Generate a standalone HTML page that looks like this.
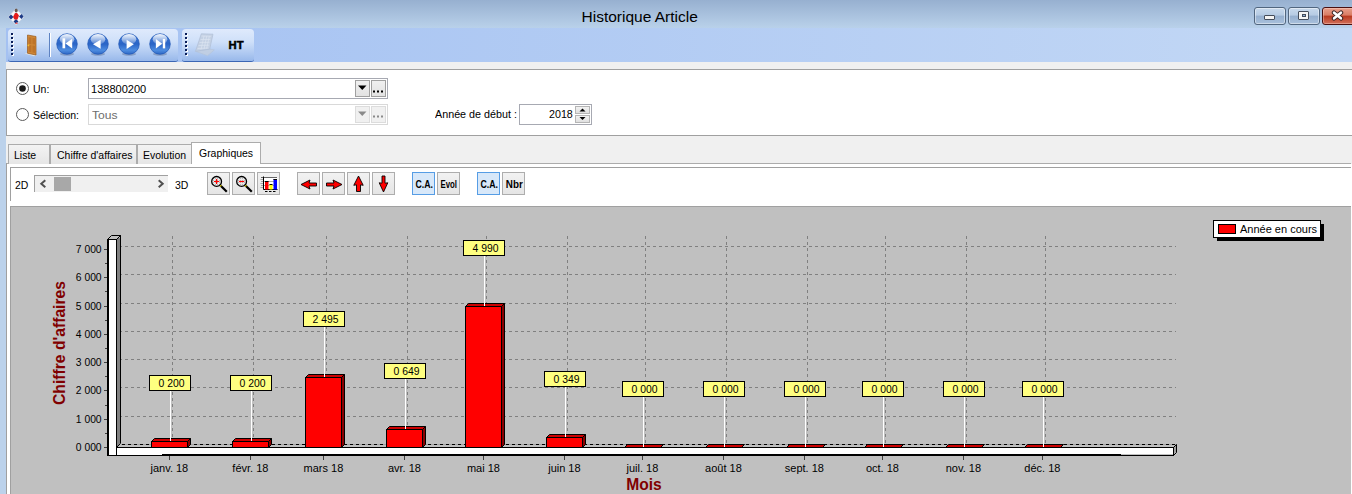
<!DOCTYPE html>
<html><head><meta charset="utf-8">
<style>
*{box-sizing:border-box;margin:0;padding:0}
html,body{width:1352px;height:494px;overflow:hidden;background:#fff;font-family:"Liberation Sans",sans-serif;color:#000}
.a{position:absolute}
.t{position:absolute;white-space:pre;font-size:10.4px;line-height:12px}
.f{position:absolute;white-space:pre;font-size:11.5px;line-height:12px;transform:scaleX(.91);transform-origin:0 0}
#title{left:0;top:0;width:1352px;height:28px;background:linear-gradient(#97b0d0,#b9d1ea)}
#lborder{left:0;top:28px;width:6px;height:466px;background:#bcd2eb}
#tbstrip{left:6px;top:28px;width:1346px;height:34px;background:linear-gradient(90deg,#a4c1f2,#c3d8f5)}
.grp{position:absolute;top:29px;height:33px;border-radius:4px 4px 3px 3px;background:linear-gradient(#dfeafc 0%,#cfe0f9 40%,#abc6f0 80%,#98b8ea 100%);border-bottom:1px solid #3b66b4}
#gstrip{left:6px;top:62px;width:1346px;height:7px;background:#f0f0f0}
#panel{left:6px;top:69px;width:1346px;height:67px;background:#fff;border-top:1px solid #a0a0a0;border-left:1px solid #a0a0a0;border-bottom:1px solid #a0a0a0}
#tabstrip{left:6px;top:136px;width:1346px;height:28px;background:#f0f0f0}
.tab{position:absolute;top:144px;height:20px;border:1px solid #acacac;border-bottom:none;background:linear-gradient(#f3f3f3,#e6e6e6)}
#tabline{left:6px;top:163px;width:1345px;height:1px;background:#acacac}
#page{left:6px;top:164px;width:1345px;height:330px;background:#fff}
.btn{position:absolute;top:172px;width:23px;height:23px;border:1px solid #adadad;background:linear-gradient(#f2f2f2,#e5e5e5)}
.btnsel{border-color:#569de5;background:#d8e8f9}
svg text{font-family:"Liberation Sans",sans-serif}
</style></head><body>
<div id="title" class="a"></div>
<!-- app icon -->
<svg class="a" style="left:6px;top:4px" width="20" height="22" viewBox="0 0 20 22">
<path d="M2 13 L10 4.5 L18 13 L10 21 Z" fill="#f4f6fa" stroke="#c8d2e2" stroke-width="0.6"/>
<g fill="#1c3a86"><path d="M2.5 13 L5 10.5 L7.5 13 L5 15.5Z"/><path d="M13 12.5 L15.5 10 L17.5 12.5 L15.5 15Z"/><path d="M7.5 17.5 L10 15 L12.5 17.5 L10 20Z"/></g>
<path d="M7 13 L9 9 L11.5 9 L13 11.5 L11.5 15.5 L8.5 15.5 Z" fill="#e41b1b"/><path d="M11 8.5 L13.5 8 L12.5 11Z" fill="#fff"/>
<path d="M9 20 L10.5 18 L12 20 Z" fill="#e86060"/>
<ellipse cx="10.2" cy="6.4" rx="1.5" ry="2" fill="#6b5a52"/>
</svg>
<div class="t" style="left:581.5px;top:8px;font-size:15.5px;line-height:18px;color:#000">Historique Article</div>
<!-- window buttons -->
<div class="a" style="left:1254px;top:7px;width:32px;height:18px;border:1px solid #51667f;border-radius:3px;background:linear-gradient(#c8d9ec 0%,#b6cbe4 45%,#95afcf 50%,#a9c1dc 100%);box-shadow:inset 0 0 0 1px rgba(255,255,255,0.45)"></div>
<div class="a" style="left:1264px;top:15px;width:11px;height:5px;background:#f4f4f4;border:1px solid #444c5a;border-radius:1px"></div>
<div class="a" style="left:1288px;top:7px;width:32px;height:18px;border:1px solid #51667f;border-radius:3px;background:linear-gradient(#c8d9ec 0%,#b6cbe4 45%,#95afcf 50%,#a9c1dc 100%);box-shadow:inset 0 0 0 1px rgba(255,255,255,0.45)"></div>
<div class="a" style="left:1298px;top:11px;width:11px;height:9px;background:#f4f4f4;border:1px solid #444c5a;border-radius:1px"></div>
<div class="a" style="left:1302px;top:14px;width:4px;height:3px;background:#8fb0d8;border:1px solid #444c5a"></div>
<div class="a" style="left:1322px;top:7px;width:40px;height:18px;border:1px solid #4a1010;border-radius:3px;background:linear-gradient(#e8a08c 0%,#d97c64 45%,#b8391f 50%,#d2705a 100%);box-shadow:inset 0 0 0 1px rgba(255,220,210,0.4)"></div>
<svg class="a" style="left:1331px;top:10px" width="13" height="11" viewBox="0 0 13 11">
<path d="M3 2.6 L10 8.4 M10 2.6 L3 8.4" stroke="#3a2626" stroke-width="4.4" stroke-linecap="round"/>
<path d="M3.1 2.7 L9.9 8.3 M9.9 2.7 L3.1 8.3" stroke="#fff" stroke-width="2.6" stroke-linecap="round"/>
</svg>

<div id="lborder" class="a"></div>
<div id="tbstrip" class="a"></div>
<div class="grp" style="left:8px;width:170px"></div>
<div class="grp" style="left:182px;width:72px"></div>
<!-- grippers -->
<svg class="a" style="left:11px;top:33px" width="3" height="24"><g fill="#fff"><rect x="1" y="1" width="2" height="2"/><rect x="1" y="5" width="2" height="2"/><rect x="1" y="9" width="2" height="2"/><rect x="1" y="13" width="2" height="2"/><rect x="1" y="17" width="2" height="2"/><rect x="1" y="21" width="2" height="2"/></g><g fill="#0a1e5a"><rect x="0" y="0" width="2" height="2"/><rect x="0" y="4" width="2" height="2"/><rect x="0" y="8" width="2" height="2"/><rect x="0" y="12" width="2" height="2"/><rect x="0" y="16" width="2" height="2"/><rect x="0" y="20" width="2" height="2"/></g></svg>
<svg class="a" style="left:185px;top:33px" width="3" height="24"><g fill="#fff"><rect x="1" y="1" width="2" height="2"/><rect x="1" y="5" width="2" height="2"/><rect x="1" y="9" width="2" height="2"/><rect x="1" y="13" width="2" height="2"/><rect x="1" y="17" width="2" height="2"/><rect x="1" y="21" width="2" height="2"/></g><g fill="#0a1e5a"><rect x="0" y="0" width="2" height="2"/><rect x="0" y="4" width="2" height="2"/><rect x="0" y="8" width="2" height="2"/><rect x="0" y="12" width="2" height="2"/><rect x="0" y="16" width="2" height="2"/><rect x="0" y="20" width="2" height="2"/></g></svg>
<!-- door -->
<svg class="a" style="left:24px;top:33px" width="16" height="24" viewBox="0 0 16 24">
<path d="M0.5 20.5 L3 20 L12.5 22.3 L10 23.2 Z" fill="#e6e4e0" opacity="0.9"/>
<path d="M3.5 2 L12 3.5 L12 22 L3.5 20.2 Z" fill="#cf8838" stroke="#9a5a1c" stroke-width="0.7"/>
<path d="M4.6 4.2 L7.4 4.6 L7.4 11.2 L4.6 10.8Z M8.4 4.8 L11 5.2 L11 11.5 L8.4 11.3Z M4.6 12 L7.4 12.3 L7.4 19.3 L4.6 18.7Z M8.4 12.5 L11 12.7 L11 20 L8.4 19.5Z" fill="#b86e26" opacity="0.75"/>
<rect x="3.6" y="11.6" width="1.6" height="1.6" fill="#f2c030"/>
</svg>
<div class="a" style="left:49px;top:33px;width:1px;height:24px;background:#5d82c2"></div>
<div class="a" style="left:50px;top:33px;width:1px;height:24px;background:#fff"></div>
<!-- nav circles -->
<svg class="a" style="left:55px;top:32px" width="118" height="25" viewBox="0 0 118 25">
<defs>
<linearGradient id="cg" x1="0" y1="0" x2="0" y2="1">
<stop offset="0" stop-color="#3b78d6"/><stop offset="0.5" stop-color="#2a64c6"/><stop offset="0.8" stop-color="#4d8ce0"/><stop offset="1" stop-color="#2f68c4"/>
</linearGradient>
<linearGradient id="hg" x1="0" y1="0" x2="0" y2="1"><stop offset="0" stop-color="#fff" stop-opacity="0.95"/><stop offset="1" stop-color="#fff" stop-opacity="0.15"/></linearGradient>
</defs>
<g id="c1">
<ellipse cx="12" cy="22" rx="7" ry="1.8" fill="#34446a" opacity="0.3"/>
<circle cx="12" cy="12" r="10.3" fill="url(#cg)" stroke="#1f56b4" stroke-width="0.7"/>
<ellipse cx="12" cy="7.3" rx="7.3" ry="5.2" fill="url(#hg)"/>
</g>
<use href="#c1" x="31"/><use href="#c1" x="62"/><use href="#c1" x="93"/>
<g fill="#fff">
<rect x="7.5" y="6.3" width="2.7" height="10"/><path d="M10.5 11.5 L17.2 6.8 L17.2 16.4Z"/>
<path d="M38 12.2 L45.6 7.7 L45.6 16.7Z"/>
<path d="M78.8 12.3 L71.6 7.7 L71.6 17Z"/>
<path d="M107.2 11.7 L100.9 6.9 L100.9 16.4Z"/><rect x="107.8" y="6.9" width="2.4" height="9.5"/>
</g>
</svg>
<!-- calculator -->
<svg class="a" style="left:193px;top:33px" width="24" height="24" viewBox="0 0 24 24">
<path d="M2.5 18.3 L14.5 22.7 L21.4 16.9 L16.7 16.1 Z" fill="#c2cfe2" stroke="#b4c3d8" stroke-width="0.6" opacity="0.9"/>
<path d="M8.3 0.8 L20 1.2 L16.7 16.1 L2.5 18.3 Z" fill="#c4d1e4" stroke="#b0bfd5" stroke-width="0.7"/>
<g stroke="#dbe4f0" stroke-width="0.7" fill="none">
<path d="M8.5 3 L18 3.3 M7.6 6.5 L17.3 6.5 M6.6 9.5 L16.6 9.3 M5.6 12.5 L15.9 12.2 M4.6 15.5 L15.2 15"/>
<path d="M11 3 L8 16.5 M13.7 3.2 L11 16 M16.3 3.3 L13.6 15.6"/>
</g>
</svg>
<svg class="a" style="left:226px;top:38px" width="22" height="14" viewBox="0 0 22 14">
<text x="2.6" y="10.8" font-family="Liberation Sans" font-weight="bold" font-size="11" fill="#000" stroke="#000" stroke-width="0.5" textLength="15" lengthAdjust="spacingAndGlyphs">HT</text>
</svg>

<div id="gstrip" class="a"></div>
<div id="panel" class="a"></div>
<!-- radios -->
<svg class="a" style="left:15px;top:81px" width="15" height="40" viewBox="0 0 15 40">
<circle cx="7.5" cy="7.5" r="6" fill="#fff" stroke="#5a5a5a" stroke-width="1"/>
<circle cx="7.5" cy="7.5" r="3.3" fill="#1a1a1a"/>
<circle cx="7.5" cy="33.5" r="6" fill="#fff" stroke="#5a5a5a" stroke-width="1"/>
</svg>
<div class="f" style="left:32.5px;top:82.7px">Un:</div>
<div class="f" style="left:32.5px;top:108.7px">Sélection:</div>
<!-- combo 1 -->
<div class="a" style="left:88px;top:78px;width:300px;height:21px;border:1px solid #a7a9b2;background:#fff"></div>
<div class="f" style="left:91px;top:82.7px;transform:scaleX(.96)">138800200</div>
<div class="a" style="left:355px;top:80px;width:15px;height:17px;border:1px solid #a0a0a0;background:linear-gradient(#f0f0f0,#e2e2e2)"></div>
<svg class="a" style="left:357px;top:84px" width="11" height="8"><path d="M1 1.5 L9.5 1.5 L5.25 6Z" fill="#000"/></svg>
<div class="a" style="left:371px;top:80px;width:15px;height:17px;border:1px solid #a0a0a0;background:linear-gradient(#f0f0f0,#e2e2e2)"></div>
<svg class="a" style="left:372px;top:90px" width="13" height="4"><g fill="#000"><rect x="1" y="0.5" width="2" height="2"/><rect x="5" y="0.5" width="2" height="2"/><rect x="9" y="0.5" width="2" height="2"/></g></svg>
<!-- combo 2 (disabled) -->
<div class="a" style="left:88px;top:104px;width:300px;height:21px;border:1px solid #d9d9d9;background:#fff"></div>
<div class="f" style="left:91.8px;top:108.7px;color:#6d6d6d;transform:scaleX(1.05)">Tous</div>
<div class="a" style="left:355px;top:106px;width:15px;height:17px;border:1px solid #dcdcdc;background:#f0f0f0"></div>
<svg class="a" style="left:357px;top:110px" width="11" height="8"><path d="M1 1.5 L9.5 1.5 L5.25 6Z" fill="#8a8a8a"/></svg>
<div class="a" style="left:371px;top:106px;width:15px;height:17px;border:1px solid #dcdcdc;background:#f0f0f0"></div>
<svg class="a" style="left:372px;top:115px" width="13" height="4"><g fill="#8a8a8a"><rect x="1" y="0.5" width="2" height="2"/><rect x="5" y="0.5" width="2" height="2"/><rect x="9" y="0.5" width="2" height="2"/></g></svg>
<!-- year spinner -->
<div class="f" style="left:434.5px;top:107.9px;transform:scaleX(.935)">Année de début :</div>
<div class="a" style="left:519px;top:104px;width:73px;height:21px;border:1px solid #a7a9b2;background:#fff"></div>
<div class="f" style="left:548.5px;top:107.7px;transform:scaleX(.93)">2018</div>
<div class="a" style="left:575px;top:106px;width:15px;height:8px;border:1px solid #b5b5b5;background:linear-gradient(#f2f2f2,#e0e0e0)"></div>
<div class="a" style="left:575px;top:115px;width:15px;height:8px;border:1px solid #b5b5b5;background:linear-gradient(#f2f2f2,#e0e0e0)"></div>
<svg class="a" style="left:575px;top:106px" width="15" height="17"><path d="M4.5 5.5 L10.5 5.5 L7.5 2.5Z" fill="#000"/><path d="M4.5 11 L10.5 11 L7.5 14Z" fill="#000"/></svg>

<div id="tabstrip" class="a"></div>
<div id="page" class="a"></div>
<div id="tabline" class="a"></div>
<div class="a" style="left:6px;top:163px;width:1px;height:331px;background:#a0a0a0"></div>
<div class="tab" style="left:8px;width:42px"></div>
<div class="tab" style="left:50px;width:87px"></div>
<div class="tab" style="left:137px;width:55px"></div>
<div class="a" style="left:191px;top:142px;width:70px;height:22px;border:1px solid #acacac;border-bottom:none;background:#fff"></div>
<div class="f" style="left:13.5px;top:148.7px">Liste</div>
<div class="f" style="left:56.5px;top:148.7px">Chiffre d'affaires</div>
<div class="f" style="left:142.5px;top:148.7px">Evolution</div>
<div class="f" style="left:199px;top:146.7px">Graphiques</div>

<!-- inner toolbar panel -->
<div class="a" style="left:10px;top:167px;width:1341px;height:1px;background:#a0a0a0"></div>
<div class="a" style="left:10px;top:167px;width:1px;height:34px;background:#a0a0a0"></div>
<div class="f" style="left:15px;top:178.7px">2D</div>
<div class="a" style="left:34px;top:175px;width:134px;height:17px;background:#f0f0f0;border-top:1px solid #a0a0a0;border-left:1px solid #a0a0a0"></div>
<svg class="a" style="left:38px;top:178px" width="130" height="11"><path d="M7.3 2.3 L3.3 5.8 L7.3 9.3" stroke="#505050" stroke-width="2" fill="none"/><path d="M120.7 2.3 L124.7 5.8 L120.7 9.3" stroke="#505050" stroke-width="2" fill="none"/></svg>
<div class="a" style="left:54px;top:177px;width:17px;height:14px;background:#a8a8a8"></div>
<div class="f" style="left:174.5px;top:178.7px">3D</div>

<div class="btn" style="left:207px"></div>
<div class="btn" style="left:232px"></div>
<div class="btn" style="left:257px"></div>
<div class="btn" style="left:297px"></div>
<div class="btn" style="left:322px"></div>
<div class="btn" style="left:347px"></div>
<div class="btn" style="left:372px"></div>
<div class="btn btnsel" style="left:412px"></div>
<div class="btn" style="left:437px"></div>
<div class="btn btnsel" style="left:477px"></div>
<div class="btn" style="left:502px"></div>
<!-- magnifiers -->
<svg class="a" style="left:207px;top:172px" width="50" height="23" viewBox="0 0 50 23">
<defs><pattern id="dots" width="2" height="2" patternUnits="userSpaceOnUse"><rect width="2" height="2" fill="#e8e8e8"/><rect width="1" height="1" fill="#b8b8b8"/></pattern></defs>
<g id="mg">
<path d="M13.5 13.5 L19 19" stroke="#000" stroke-width="2.2" stroke-linecap="square"/>
<path d="M12.6 12.6 L14.2 14.2" stroke="#f0e000" stroke-width="1.6"/>
<circle cx="9.6" cy="9.4" r="4.9" fill="url(#dots)" stroke="#000" stroke-width="1.3"/>
</g>
<path d="M7 9.5 L12.2 9.5 M9.6 6.9 L9.6 12.1" stroke="#ff0000" stroke-width="1.2"/>
<use href="#mg" x="25"/>
<path d="M32 9.5 L37.2 9.5" stroke="#ff0000" stroke-width="1.2"/>
</svg>
<!-- chart icon -->
<svg class="a" style="left:257px;top:172px" width="23" height="23" viewBox="0 0 23 23">
<rect x="6.5" y="5.5" width="14" height="12" fill="#fff"/>
<path d="M4 5.5 L20 5.5" stroke="#404040" stroke-width="0.8"/>
<path d="M4 9.5 L20 9.5 M4 13.5 L20 13.5 M3.5 7.5 L6 7.5 M3.5 11.5 L6 11.5 M3.5 15.5 L6 15.5" stroke="#707070" stroke-width="0.6"/>
<path d="M6.5 4.5 L6.5 17.5 L20.5 17.5" stroke="#000" stroke-width="1" fill="none"/>
<rect x="8" y="9" width="3.5" height="8.5" fill="#ff0000"/><path d="M8 9.5 L11.5 9.5" stroke="#000" stroke-width="1"/>
<rect x="12.5" y="12.5" width="3" height="5" fill="#ffff00"/><path d="M12.5 12.5 L15.5 12.5" stroke="#000" stroke-width="1"/>
<rect x="16.5" y="7" width="3.5" height="10.5" fill="#0000ff"/><path d="M16.5 7.5 L20 7.5" stroke="#000" stroke-width="1"/>
<path d="M8 19.5 L10.5 19.5 M12 19.5 L14.5 19.5 M16 19.5 L18.5 19.5" stroke="#000" stroke-width="1"/>
</svg>
<!-- arrows -->
<svg class="a" style="left:297px;top:172px" width="100" height="23" viewBox="0 0 100 23">
<g fill="#ff0000" stroke="#000" stroke-width="0.9" stroke-linejoin="miter">
<path d="M4 12.5 L13 8 L12 11 L19.5 11 L19.5 14 L12 14 L13 17 Z"/>
<path d="M45 12.5 L36 8 L37 11 L29.5 11 L29.5 14 L37 14 L36 17 Z"/>
<path d="M61.5 4 L66.2 13.3 L63.5 12.8 L63.5 19.5 L59.5 19.5 L59.5 12.8 L56.8 13.3 Z"/>
<path d="M86.5 20 L90.8 10.8 L88 11.2 L88 4 L85 4 L85 11.2 L82.2 10.8 Z"/>
</g>
</svg>
<!-- CA / Evol / Nbr -->
<svg class="a" style="left:410px;top:172px" width="120" height="23" viewBox="0 0 120 23">
<g font-family="Liberation Sans" font-weight="bold" font-size="10.5" fill="#000">
<text x="5.5" y="15.8" textLength="17.5" lengthAdjust="spacingAndGlyphs">C.A.</text>
<text x="30.5" y="15.8" textLength="16.5" lengthAdjust="spacingAndGlyphs">Evol</text>
<text x="70.5" y="15.8" textLength="17.5" lengthAdjust="spacingAndGlyphs">C.A.</text>
<text x="95.8" y="15.8" textLength="17" lengthAdjust="spacingAndGlyphs">Nbr</text>
</g>
</svg>
<!-- chart -->
<svg class="a" style="left:0;top:0" width="1352" height="494" viewBox="0 0 1352 494" shape-rendering="auto">
<rect x="10" y="206" width="1341" height="288" fill="#a0a0a0"/>
<rect x="11" y="207" width="1340" height="287" fill="#c0c0c0"/>
<g shape-rendering="crispEdges">
<line x1="121" y1="444.5" x2="1176" y2="444.5" stroke="#808080" stroke-dasharray="3,3" stroke-dashoffset="-4"/>
<line x1="121" y1="416.5" x2="1176" y2="416.5" stroke="#808080" stroke-dasharray="3,3" stroke-dashoffset="-4"/>
<line x1="121" y1="387.5" x2="1176" y2="387.5" stroke="#808080" stroke-dasharray="3,3" stroke-dashoffset="-4"/>
<line x1="121" y1="359.5" x2="1176" y2="359.5" stroke="#808080" stroke-dasharray="3,3" stroke-dashoffset="-4"/>
<line x1="121" y1="331.5" x2="1176" y2="331.5" stroke="#808080" stroke-dasharray="3,3" stroke-dashoffset="-4"/>
<line x1="121" y1="303.5" x2="1176" y2="303.5" stroke="#808080" stroke-dasharray="3,3" stroke-dashoffset="-4"/>
<line x1="121" y1="274.5" x2="1176" y2="274.5" stroke="#808080" stroke-dasharray="3,3" stroke-dashoffset="-4"/>
<line x1="121" y1="246.5" x2="1176" y2="246.5" stroke="#808080" stroke-dasharray="3,3" stroke-dashoffset="-4"/>
<line x1="172.5" y1="235" x2="172.5" y2="444" stroke="#808080" stroke-dasharray="3,3" stroke-dashoffset="-1"/>
<line x1="253.5" y1="235" x2="253.5" y2="444" stroke="#808080" stroke-dasharray="3,3" stroke-dashoffset="-1"/>
<line x1="326.5" y1="235" x2="326.5" y2="444" stroke="#808080" stroke-dasharray="3,3" stroke-dashoffset="-1"/>
<line x1="407.5" y1="235" x2="407.5" y2="444" stroke="#808080" stroke-dasharray="3,3" stroke-dashoffset="-1"/>
<line x1="486.5" y1="235" x2="486.5" y2="444" stroke="#808080" stroke-dasharray="3,3" stroke-dashoffset="-1"/>
<line x1="567.5" y1="235" x2="567.5" y2="444" stroke="#808080" stroke-dasharray="3,3" stroke-dashoffset="-1"/>
<line x1="645.5" y1="235" x2="645.5" y2="444" stroke="#808080" stroke-dasharray="3,3" stroke-dashoffset="-1"/>
<line x1="726.5" y1="235" x2="726.5" y2="444" stroke="#808080" stroke-dasharray="3,3" stroke-dashoffset="-1"/>
<line x1="807.5" y1="235" x2="807.5" y2="444" stroke="#808080" stroke-dasharray="3,3" stroke-dashoffset="-1"/>
<line x1="885.5" y1="235" x2="885.5" y2="444" stroke="#808080" stroke-dasharray="3,3" stroke-dashoffset="-1"/>
<line x1="966.5" y1="235" x2="966.5" y2="444" stroke="#808080" stroke-dasharray="3,3" stroke-dashoffset="-1"/>
<line x1="1045.5" y1="235" x2="1045.5" y2="444" stroke="#808080" stroke-dasharray="3,3" stroke-dashoffset="-1"/>
<line x1="121" y1="444.5" x2="1177" y2="444.5" stroke="#a0a0a0"/>
<line x1="121" y1="444.5" x2="1177" y2="444.5" stroke="#000" stroke-dasharray="3,3" stroke-dashoffset="-1"/>
</g>
<rect x="107" y="239" width="2" height="217" fill="#000"/>
<rect x="109" y="240" width="7" height="214" fill="#fff"/>
<rect x="116" y="239" width="1" height="217" fill="#000"/>
<rect x="117" y="238" width="3" height="206" fill="#808080"/>
<rect x="120" y="235" width="1" height="209" fill="#000"/>
<rect x="107" y="239" width="10" height="1" fill="#000"/>
<path d="M107.5 239.5 L111.5 235.5 L120.5 235.5 L116.5 239.5 Z" fill="#c0c0c0" stroke="#000" stroke-width="1"/>
<path d="M117 447 L120 444 L121 444 L121 443 L117 443 Z" fill="#808080"/>
<path d="M116.5 447.5 L120.5 443.5" stroke="#000" stroke-width="1"/>
<rect x="117" y="447" width="1057" height="1" fill="#000"/>
<rect x="117" y="448" width="1057" height="6" fill="#fff"/>
<rect x="107" y="455" width="55" height="1" fill="#000"/>
<rect x="162" y="454" width="959" height="2" fill="#000"/>
<rect x="1121" y="455" width="53" height="1" fill="#000"/>
<rect x="109" y="454" width="53" height="1" fill="#fff"/>
<rect x="116" y="239" width="1" height="217" fill="#000"/>
<rect x="1173" y="447" width="1" height="9" fill="#000"/>
<path d="M1174 447 L1176 445 L1176 452 L1174 454 Z" fill="#a0a0a0"/>
<path d="M1173.5 447.5 L1176.5 444.5 L1176.5 452.5 L1173.5 455.5" fill="none" stroke="#000" stroke-width="1"/>
<rect x="104" y="447" width="3" height="1" fill="#404040"/>
<rect x="105" y="433" width="2" height="1" fill="#404040"/>
<rect x="104" y="419" width="3" height="1" fill="#404040"/>
<rect x="105" y="405" width="2" height="1" fill="#404040"/>
<rect x="104" y="390" width="3" height="1" fill="#404040"/>
<rect x="105" y="376" width="2" height="1" fill="#404040"/>
<rect x="104" y="362" width="3" height="1" fill="#404040"/>
<rect x="105" y="348" width="2" height="1" fill="#404040"/>
<rect x="104" y="334" width="3" height="1" fill="#404040"/>
<rect x="105" y="320" width="2" height="1" fill="#404040"/>
<rect x="104" y="306" width="3" height="1" fill="#404040"/>
<rect x="105" y="291" width="2" height="1" fill="#404040"/>
<rect x="104" y="277" width="3" height="1" fill="#404040"/>
<rect x="105" y="263" width="2" height="1" fill="#404040"/>
<rect x="104" y="249" width="3" height="1" fill="#404040"/>
<rect x="169" y="456" width="1" height="4" fill="#404040"/>
<rect x="250" y="456" width="1" height="4" fill="#404040"/>
<rect x="323" y="456" width="1" height="4" fill="#404040"/>
<rect x="404" y="456" width="1" height="4" fill="#404040"/>
<rect x="483" y="456" width="1" height="4" fill="#404040"/>
<rect x="564" y="456" width="1" height="4" fill="#404040"/>
<rect x="642" y="456" width="1" height="4" fill="#404040"/>
<rect x="723" y="456" width="1" height="4" fill="#404040"/>
<rect x="804" y="456" width="1" height="4" fill="#404040"/>
<rect x="882" y="456" width="1" height="4" fill="#404040"/>
<rect x="963" y="456" width="1" height="4" fill="#404040"/>
<rect x="1042" y="456" width="1" height="4" fill="#404040"/>
<rect x="151" y="441" width="37" height="7" fill="#000"/>
<rect x="152" y="442" width="35" height="5" fill="#ff0000"/>
<path d="M151.5 441.5 L154.5 438.5 L190.5 438.5 L187.5 441.5 Z" fill="#cc0000" stroke="#000"/>
<path d="M187.5 441.5 L190.5 438.5 L190.5 444.5 L187.5 447.5 Z" fill="#8b0000" stroke="#000"/>
<rect x="232" y="441" width="37" height="7" fill="#000"/>
<rect x="233" y="442" width="35" height="5" fill="#ff0000"/>
<path d="M232.5 441.5 L235.5 438.5 L271.5 438.5 L268.5 441.5 Z" fill="#cc0000" stroke="#000"/>
<path d="M268.5 441.5 L271.5 438.5 L271.5 444.5 L268.5 447.5 Z" fill="#8b0000" stroke="#000"/>
<rect x="305" y="377" width="37" height="71" fill="#000"/>
<rect x="306" y="378" width="35" height="69" fill="#ff0000"/>
<path d="M305.5 377.5 L308.5 374.5 L344.5 374.5 L341.5 377.5 Z" fill="#cc0000" stroke="#000"/>
<path d="M341.5 377.5 L344.5 374.5 L344.5 444.5 L341.5 447.5 Z" fill="#8b0000" stroke="#000"/>
<rect x="386" y="429" width="37" height="19" fill="#000"/>
<rect x="387" y="430" width="35" height="17" fill="#ff0000"/>
<path d="M386.5 429.5 L389.5 426.5 L425.5 426.5 L422.5 429.5 Z" fill="#cc0000" stroke="#000"/>
<path d="M422.5 429.5 L425.5 426.5 L425.5 444.5 L422.5 447.5 Z" fill="#8b0000" stroke="#000"/>
<rect x="465" y="306" width="37" height="142" fill="#000"/>
<rect x="466" y="307" width="35" height="140" fill="#ff0000"/>
<path d="M465.5 306.5 L468.5 303.5 L504.5 303.5 L501.5 306.5 Z" fill="#cc0000" stroke="#000"/>
<path d="M501.5 306.5 L504.5 303.5 L504.5 444.5 L501.5 447.5 Z" fill="#8b0000" stroke="#000"/>
<rect x="546" y="437" width="37" height="11" fill="#000"/>
<rect x="547" y="438" width="35" height="9" fill="#ff0000"/>
<path d="M546.5 437.5 L549.5 434.5 L585.5 434.5 L582.5 437.5 Z" fill="#cc0000" stroke="#000"/>
<path d="M582.5 437.5 L585.5 434.5 L585.5 444.5 L582.5 447.5 Z" fill="#8b0000" stroke="#000"/>
<path d="M624.5 447.5 L627.5 444.5 L663.5 444.5 L660.5 447.5 Z" fill="#cc0000" stroke="#000"/>
<path d="M705.5 447.5 L708.5 444.5 L744.5 444.5 L741.5 447.5 Z" fill="#cc0000" stroke="#000"/>
<path d="M786.5 447.5 L789.5 444.5 L825.5 444.5 L822.5 447.5 Z" fill="#cc0000" stroke="#000"/>
<path d="M864.5 447.5 L867.5 444.5 L903.5 444.5 L900.5 447.5 Z" fill="#cc0000" stroke="#000"/>
<path d="M945.5 447.5 L948.5 444.5 L984.5 444.5 L981.5 447.5 Z" fill="#cc0000" stroke="#000"/>
<path d="M1024.5 447.5 L1027.5 444.5 L1063.5 444.5 L1060.5 447.5 Z" fill="#cc0000" stroke="#000"/>
<rect x="170" y="391" width="1" height="50" fill="#fff"/>
<rect x="149" y="375" width="42" height="16" fill="#000"/>
<rect x="150" y="376" width="40" height="14" fill="#ffff80"/>
<text x="171.5" y="387" text-anchor="middle" font-size="11" textLength="26" lengthAdjust="spacingAndGlyphs" fill="#000">0 200</text>
<rect x="251" y="391" width="1" height="50" fill="#fff"/>
<rect x="230" y="375" width="42" height="16" fill="#000"/>
<rect x="231" y="376" width="40" height="14" fill="#ffff80"/>
<text x="252.5" y="387" text-anchor="middle" font-size="11" textLength="26" lengthAdjust="spacingAndGlyphs" fill="#000">0 200</text>
<rect x="324" y="327" width="1" height="50" fill="#fff"/>
<rect x="303" y="311" width="42" height="16" fill="#000"/>
<rect x="304" y="312" width="40" height="14" fill="#ffff80"/>
<text x="325.5" y="323" text-anchor="middle" font-size="11" textLength="26" lengthAdjust="spacingAndGlyphs" fill="#000">2 495</text>
<rect x="405" y="379" width="1" height="50" fill="#fff"/>
<rect x="384" y="363" width="42" height="16" fill="#000"/>
<rect x="385" y="364" width="40" height="14" fill="#ffff80"/>
<text x="406.5" y="375" text-anchor="middle" font-size="11" textLength="26" lengthAdjust="spacingAndGlyphs" fill="#000">0 649</text>
<rect x="484" y="256" width="1" height="50" fill="#fff"/>
<rect x="463" y="240" width="42" height="16" fill="#000"/>
<rect x="464" y="241" width="40" height="14" fill="#ffff80"/>
<text x="485.5" y="252" text-anchor="middle" font-size="11" textLength="26" lengthAdjust="spacingAndGlyphs" fill="#000">4 990</text>
<rect x="565" y="387" width="1" height="50" fill="#fff"/>
<rect x="544" y="371" width="42" height="16" fill="#000"/>
<rect x="545" y="372" width="40" height="14" fill="#ffff80"/>
<text x="566.5" y="383" text-anchor="middle" font-size="11" textLength="26" lengthAdjust="spacingAndGlyphs" fill="#000">0 349</text>
<rect x="643" y="397" width="1" height="50" fill="#fff"/>
<rect x="622" y="381" width="42" height="16" fill="#000"/>
<rect x="623" y="382" width="40" height="14" fill="#ffff80"/>
<text x="644.5" y="393" text-anchor="middle" font-size="11" textLength="26" lengthAdjust="spacingAndGlyphs" fill="#000">0 000</text>
<rect x="724" y="397" width="1" height="50" fill="#fff"/>
<rect x="703" y="381" width="42" height="16" fill="#000"/>
<rect x="704" y="382" width="40" height="14" fill="#ffff80"/>
<text x="725.5" y="393" text-anchor="middle" font-size="11" textLength="26" lengthAdjust="spacingAndGlyphs" fill="#000">0 000</text>
<rect x="805" y="397" width="1" height="50" fill="#fff"/>
<rect x="784" y="381" width="42" height="16" fill="#000"/>
<rect x="785" y="382" width="40" height="14" fill="#ffff80"/>
<text x="806.5" y="393" text-anchor="middle" font-size="11" textLength="26" lengthAdjust="spacingAndGlyphs" fill="#000">0 000</text>
<rect x="883" y="397" width="1" height="50" fill="#fff"/>
<rect x="862" y="381" width="42" height="16" fill="#000"/>
<rect x="863" y="382" width="40" height="14" fill="#ffff80"/>
<text x="884.5" y="393" text-anchor="middle" font-size="11" textLength="26" lengthAdjust="spacingAndGlyphs" fill="#000">0 000</text>
<rect x="964" y="397" width="1" height="50" fill="#fff"/>
<rect x="943" y="381" width="42" height="16" fill="#000"/>
<rect x="944" y="382" width="40" height="14" fill="#ffff80"/>
<text x="965.5" y="393" text-anchor="middle" font-size="11" textLength="26" lengthAdjust="spacingAndGlyphs" fill="#000">0 000</text>
<rect x="1043" y="397" width="1" height="50" fill="#fff"/>
<rect x="1022" y="381" width="42" height="16" fill="#000"/>
<rect x="1023" y="382" width="40" height="14" fill="#ffff80"/>
<text x="1044.5" y="393" text-anchor="middle" font-size="11" textLength="26" lengthAdjust="spacingAndGlyphs" fill="#000">0 000</text>
<text x="75.8" y="451" font-size="11" textLength="25.8" lengthAdjust="spacingAndGlyphs" fill="#000">0 000</text>
<text x="75.8" y="423" font-size="11" textLength="25.8" lengthAdjust="spacingAndGlyphs" fill="#000">1 000</text>
<text x="75.8" y="394" font-size="11" textLength="25.8" lengthAdjust="spacingAndGlyphs" fill="#000">2 000</text>
<text x="75.8" y="366" font-size="11" textLength="25.8" lengthAdjust="spacingAndGlyphs" fill="#000">3 000</text>
<text x="75.8" y="338" font-size="11" textLength="25.8" lengthAdjust="spacingAndGlyphs" fill="#000">4 000</text>
<text x="75.8" y="310" font-size="11" textLength="25.8" lengthAdjust="spacingAndGlyphs" fill="#000">5 000</text>
<text x="75.8" y="281" font-size="11" textLength="25.8" lengthAdjust="spacingAndGlyphs" fill="#000">6 000</text>
<text x="75.8" y="253" font-size="11" textLength="25.8" lengthAdjust="spacingAndGlyphs" fill="#000">7 000</text>
<text x="169.4" y="472" text-anchor="middle" font-size="11" fill="#000">janv. 18</text>
<text x="250.4" y="472" text-anchor="middle" font-size="11" fill="#000">févr. 18</text>
<text x="323.4" y="472" text-anchor="middle" font-size="11" fill="#000">mars 18</text>
<text x="404.4" y="472" text-anchor="middle" font-size="11" fill="#000">avr. 18</text>
<text x="483.4" y="472" text-anchor="middle" font-size="11" fill="#000">mai 18</text>
<text x="564.4" y="472" text-anchor="middle" font-size="11" fill="#000">juin 18</text>
<text x="642.4" y="472" text-anchor="middle" font-size="11" fill="#000">juil. 18</text>
<text x="723.4" y="472" text-anchor="middle" font-size="11" fill="#000">août 18</text>
<text x="804.4" y="472" text-anchor="middle" font-size="11" fill="#000">sept. 18</text>
<text x="882.4" y="472" text-anchor="middle" font-size="11" fill="#000">oct. 18</text>
<text x="963.4" y="472" text-anchor="middle" font-size="11" fill="#000">nov. 18</text>
<text x="1042.4" y="472" text-anchor="middle" font-size="11" fill="#000">déc. 18</text>
<text x="644" y="489.5" text-anchor="middle" font-size="15.6" font-weight="bold" fill="#800000">Mois</text>
<text transform="translate(65 343) rotate(-90)" text-anchor="middle" font-size="15.7" font-weight="bold" fill="#800000">Chiffre d'affaires</text>
<rect x="1217" y="224" width="107" height="17" fill="#000"/>
<rect x="1213" y="220" width="108" height="18" fill="#000"/>
<rect x="1214" y="221" width="106" height="16" fill="#fff"/>
<rect x="1218" y="224" width="18" height="10" fill="#000"/>
<rect x="1219" y="225" width="16" height="8" fill="#ff0000"/>
<text x="1240" y="233" font-size="11" fill="#000">Année en cours</text>
</svg>
</body></html>
